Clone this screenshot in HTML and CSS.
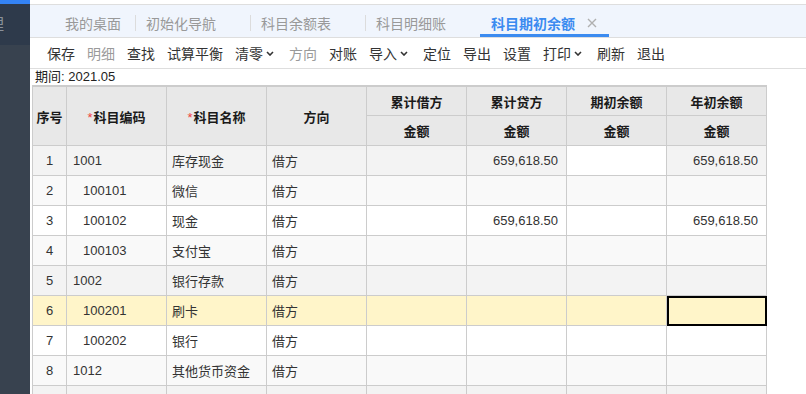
FILE: index.html
```html
<!DOCTYPE html>
<html lang="zh">
<head>
<meta charset="utf-8">
<title>科目期初余额</title>
<link rel="stylesheet" href="styles.css">
</head>
<body>
<div class="app">
  <aside class="sidebar">
    <div class="side-top"></div>
    <div class="side-head"><span class="side-glyph">理</span></div>
    <div class="side-body"></div>
  </aside>
  <main class="main">
    <div class="topgap"></div>
    <nav class="tabs">
      <div class="tab tab-home">我的桌面</div>
      <div class="tab">初始化导航<span class="tab-close"></span></div>
      <div class="tab">科目余额表<span class="tab-close"></span></div>
      <div class="tab">科目明细账<span class="tab-close"></span></div>
      <div class="tab active">科目期初余额<span class="tab-close"><svg width="10" height="10" viewBox="0 0 10 10"><path d="M1 1l8 8M9 1l-8 8" stroke="#b0b0b0" stroke-width="1.4"/></svg></span></div>
    </nav>
    <div class="toolbar">
      <span class="tb">保存</span>
      <span class="tb off">明细</span>
      <span class="tb">查找</span>
      <span class="tb">试算平衡</span>
      <span class="tb">清零<span class="caret"><svg width="8" height="5" viewBox="0 0 8 5"><path d="M1 1l3 3 3-3" fill="none" stroke="#333" stroke-width="1.6"/></svg></span></span>
      <span class="tb off">方向</span>
      <span class="tb">对账</span>
      <span class="tb">导入<span class="caret"><svg width="8" height="5" viewBox="0 0 8 5"><path d="M1 1l3 3 3-3" fill="none" stroke="#333" stroke-width="1.6"/></svg></span></span>
      <span class="tb">定位</span>
      <span class="tb">导出</span>
      <span class="tb">设置</span>
      <span class="tb">打印<span class="caret"><svg width="8" height="5" viewBox="0 0 8 5"><path d="M1 1l3 3 3-3" fill="none" stroke="#333" stroke-width="1.6"/></svg></span></span>
      <span class="tb">刷新</span>
      <span class="tb">退出</span>
    </div>
    <div class="period">期间: 2021.05</div>
    <div class="grid-wrap">
    <table class="grid">
      <colgroup>
        <col class="w-no"><col class="w"><col class="w"><col class="w"><col class="w"><col class="w"><col class="w"><col class="w">
      </colgroup>
      <thead>
        <tr class="h1">
          <th rowspan="2">序号</th>
          <th rowspan="2"><span class="req">*</span>科目编码</th>
          <th rowspan="2"><span class="req">*</span>科目名称</th>
          <th rowspan="2">方向</th>
          <th>累计借方</th>
          <th>累计贷方</th>
          <th>期初余额</th>
          <th>年初余额</th>
        </tr>
        <tr class="h2">
          <th>金额</th><th>金额</th><th>金额</th><th>金额</th>
        </tr>
      </thead>
      <tbody>
        <tr class="r-a"><td class="no">1</td><td class="code">1001</td><td class="txt">库存现金</td><td class="txt">借方</td><td class="num"></td><td class="num">659,618.50</td><td class="num edit"></td><td class="num">659,618.50</td></tr>
        <tr class="r-b"><td class="no">2</td><td class="code sub">100101</td><td class="txt">微信</td><td class="txt">借方</td><td class="num"></td><td class="num"></td><td class="num"></td><td class="num"></td></tr>
        <tr class="r-w"><td class="no">3</td><td class="code sub">100102</td><td class="txt">现金</td><td class="txt">借方</td><td class="num"></td><td class="num">659,618.50</td><td class="num"></td><td class="num">659,618.50</td></tr>
        <tr class="r-b"><td class="no">4</td><td class="code sub">100103</td><td class="txt">支付宝</td><td class="txt">借方</td><td class="num"></td><td class="num"></td><td class="num"></td><td class="num"></td></tr>
        <tr class="r-a"><td class="no">5</td><td class="code">1002</td><td class="txt">银行存款</td><td class="txt">借方</td><td class="num"></td><td class="num"></td><td class="num"></td><td class="num"></td></tr>
        <tr class="r-sel"><td class="no">6</td><td class="code sub">100201</td><td class="txt">刷卡</td><td class="txt">借方</td><td class="num"></td><td class="num"></td><td class="num"></td><td class="num focus"></td></tr>
        <tr class="r-w"><td class="no">7</td><td class="code sub">100202</td><td class="txt">银行</td><td class="txt">借方</td><td class="num"></td><td class="num"></td><td class="num"></td><td class="num"></td></tr>
        <tr class="r-b"><td class="no">8</td><td class="code">1012</td><td class="txt">其他货币资金</td><td class="txt">借方</td><td class="num"></td><td class="num"></td><td class="num"></td><td class="num"></td></tr>
        <tr class="r-a"><td class="no">9</td><td class="code sub">101201</td><td class="txt">银行汇票</td><td class="txt">借方</td><td class="num"></td><td class="num"></td><td class="num"></td><td class="num"></td></tr>
      </tbody>
    </table>
    </div>
  </main>
</div>
</body>
</html>
```
FILE: styles.css
```css
html, body {
  margin: 0;
  padding: 0;
  background: #fff;
}
body {
  font-family: "Liberation Sans", "Noto Sans CJK SC", sans-serif;
  color: #333;
  width: 806px;
  height: 394px;
  overflow: hidden;
}
.app {
  display: flex;
  height: 394px;
}
.sidebar {
  width: 30px;
  flex: 0 0 30px;
  display: flex;
  flex-direction: column;
  overflow: hidden;
}
.side-top {
  height: 4px;
  flex-shrink: 0;
  background: #3483f5;
}
.side-head {
  height: 41px;
  flex-shrink: 0;
  background: #2e3a4b;
  overflow: hidden;
}
.side-glyph {
  display: block;
  margin-left: -12px;
  margin-top: 10px;
  font-size: 16px;
  line-height: 18px;
  color: #8a919b;
  font-family: "Noto Sans CJK SC", sans-serif;
}
.side-body {
  flex: 1;
  background: #38424f;
}
.main {
  flex: 1;
  min-width: 0;
  display: flex;
  flex-direction: column;
  overflow: hidden;
}
.main > * {
  flex-shrink: 0;
}
.topgap {
  height: 4px;
}
.tabs {
  height: 32px;
  background: #f0f5fd;
  border-top: 1px solid #dedede;
  border-bottom: 1px solid #dedede;
  display: flex;
  padding-left: 24px;
  font-size: 14px;
  color: #999;
}
.tab {
  position: relative;
  display: flex;
  align-items: center;
  padding: 3px 12px 0 11px;
  white-space: nowrap;
}
.tab::before {
  content: "";
  position: absolute;
  left: 0;
  top: 10px;
  width: 1px;
  height: 16px;
  background: #dcdcdc;
}
.tab-home {
  padding-right: 14px;
}
.tab-home::before {
  display: none;
}
.tab-close {
  display: inline-flex;
  width: 10px;
  height: 10px;
  margin-left: 12px;
}
.tab.active {
  color: #3b8bf0;
  font-weight: bold;
  box-shadow: inset 0 -3px 0 #3b8bf0;
}
.tab.active::before {
  display: none;
}
.toolbar {
  height: 30px;
  border-bottom: 1px solid #dedede;
  display: flex;
  align-items: center;
  gap: 12px;
  padding-left: 17px;
  font-size: 14px;
  color: #333;
}
.tb {
  display: inline-flex;
  align-items: center;
  white-space: nowrap;
}
.tb.off {
  color: #9a9a9a;
}
.caret {
  display: inline-flex;
  padding: 0 3px;
}
.period {
  height: 16px;
  line-height: 16px;
  font-size: 13px;
  padding-left: 5px;
  color: #222;
}
.grid-wrap {
  padding-left: 2px;
}
.grid {
  table-layout: fixed;
  width: 735px;
  border-collapse: separate;
  border-spacing: 0;
  border-left: 1px solid #cccccc;
  border-top: 2px solid #cccccc;
  font-size: 13px;
}
.w-no { width: 34px; }
.w { width: 100px; }
.grid th, .grid td {
  box-sizing: border-box;
  border-right: 1px solid #cccccc;
  border-bottom: 1px solid #cccccc;
  padding: 0;
  white-space: nowrap;
  overflow: hidden;
}
.grid th {
  background: #e8e8e8;
  color: #1a1a1a;
  font-weight: bold;
  text-align: center;
}
.h1 th { height: 29px; }
.h2 th { height: 30px; }
.req {
  color: #f04040;
  font-weight: normal;
  margin-right: 1px;
}
.grid td {
  height: 30px;
  color: #333;
}
.grid td.no { text-align: center; }
.grid td.code { padding-left: 6px; }
.grid td.code.sub { padding-left: 16px; }
.grid td.txt { padding-left: 5px; }
.grid td.num {
  text-align: right;
  padding-right: 8px;
}
.r-a td { background: #f3f3f3; }
.r-b td { background: #f9f9f9; }
.r-w td { background: #ffffff; }
.r-sel td { background: #fff5c9; }
.grid td.edit { background: #ffffff; }
.grid td.focus {
  outline: 2px solid #000;
  outline-offset: -2px;
}
```
